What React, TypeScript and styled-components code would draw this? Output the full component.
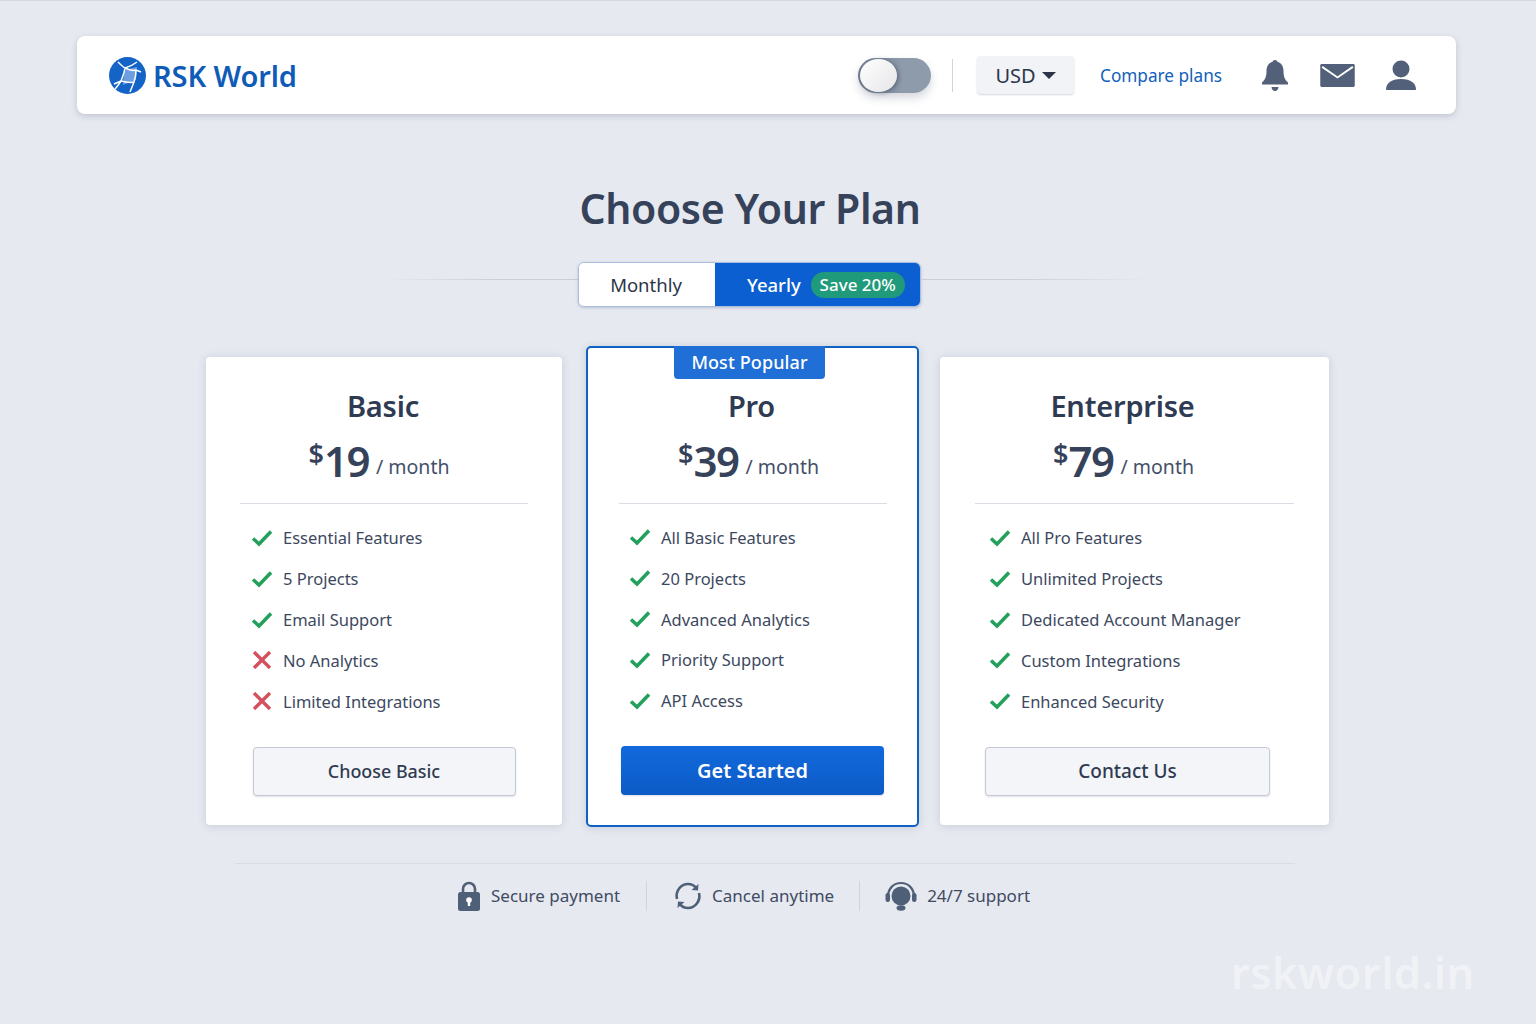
import styled, { createGlobalStyle } from 'styled-components';
import { ReactNode } from 'react';

const GlobalStyle = createGlobalStyle`
    html, body {
        margin: 0;
        padding: 0;
    }
    body {
        background: #e6e9f0;
        font-family: "Noto Sans", "Open Sans", sans-serif;
        color: #2f3b52;
    }
    * { box-sizing: border-box; }
`;

const Page = styled.div`
    position: relative;
    width: 1536px;
    height: 1024px;
    overflow: hidden;
    padding-top: 36px;
    border-top: 1px solid #d5d8e0;
`;

const Header = styled.header`
    width: 1379px;
    height: 78px;
    margin-top: -1px;
    margin-left: 77px;
    padding: 0 39px 0 31px;
    display: flex;
    align-items: center;
    background: #fff;
    border-radius: 8px;
    box-shadow: 0 2px 6px rgba(90, 100, 125, 0.28);
`;

const Logo = styled.div`
    display: flex;
    align-items: center;
    gap: 6px;
    font-size: 29px;
    font-weight: 600;
    letter-spacing: -0.1px;
    color: #0f5cb8;
`;

const HeaderActions = styled.div`
    margin-left: auto;
    display: flex;
    align-items: center;
`;

const Switch = styled.div`
    position: relative;
    width: 73px;
    height: 35px;
    border-radius: 18px;
    background: linear-gradient(90deg, #6f7d91, #8e9bab 60%);
    box-shadow: 0 5px 8px rgba(90, 100, 125, 0.25);
`;

const SwitchKnob = styled.span`
    position: absolute;
    left: 2px;
    top: 1px;
    width: 37px;
    height: 33px;
    border-radius: 50%;
    background: linear-gradient(135deg, #fff, #e6e6e9);
    box-shadow: 2px 1px 4px rgba(50, 60, 80, 0.45);
`;

const VerticalRule = styled.span<{ $height: number; $margin: string }>`
    display: block;
    width: 1px;
    height: ${p => p.$height}px;
    margin: ${p => p.$margin};
    background: #cfd4dd;
`;

const CurrencyButton = styled.div`
    width: 97px;
    height: 38px;
    display: flex;
    align-items: center;
    justify-content: center;
    gap: 6px;
    background: #f2f3f7;
    border-radius: 4px;
    box-shadow: 0 1px 2px rgba(90, 100, 125, 0.25);
    font-size: 20px;
    color: #2b3549;
`;

const Caret = styled.span`
    width: 0;
    height: 0;
    border-left: 7px solid transparent;
    border-right: 7px solid transparent;
    border-top: 7px solid #2b3549;
    margin-top: 1px;
`;

const CompareLink = styled.a`
    margin-left: 26px;
    margin-right: 38px;
    font-size: 17.2px;
    color: #1160b9;
`;

const IconGroup = styled.div`
    display: flex;
    align-items: center;
    gap: 30px;
    color: #526079;
`;

const Title = styled.h1`
    margin: 67px 0 0;
    padding-right: 36px;
    height: 54px;
    text-align: center;
    font-size: 41px;
    line-height: 54px;
    font-weight: 600;
    letter-spacing: -0.4px;
    color: #35425a;
`;

const BillingRow = styled.div`
    margin-top: 27px;
    display: flex;
    align-items: center;
    padding-left: 385px;
`;

const FadeLine = styled.span<{ $width: number; $dir: string }>`
    display: block;
    width: ${p => p.$width}px;
    height: 1px;
    margin-top: -11px;
    background: linear-gradient(${p => p.$dir}, rgba(200, 205, 216, 0), #c8cdd8 60%);
`;

const BillingToggle = styled.div`
    display: flex;
    width: 343px;
    height: 45px;
    border-radius: 6px;
    border: 1px solid #a9bdde;
    overflow: hidden;
    box-shadow: 0 1px 3px rgba(80, 100, 140, 0.3);
`;

const MonthlyOption = styled.div`
    width: 136px;
    padding-right: 2px;
    display: flex;
    align-items: center;
    justify-content: center;
    background: #fff;
    font-size: 18.5px;
    color: #2b3549;
`;

const YearlyOption = styled.div`
    flex: 1;
    padding-left: 32px;
    display: flex;
    align-items: center;
    gap: 10px;
    background: #0b5fd0;
    color: #fff;
    font-size: 18.5px;
    font-weight: 500;
`;

const SaveBadge = styled.span`
    width: 94px;
    height: 26px;
    display: flex;
    align-items: center;
    justify-content: center;
    border-radius: 13px;
    background: #1f9a7b;
    font-size: 17px;
    font-weight: 500;
`;

const Plans = styled.div`
    margin-top: 39px;
    margin-left: 206px;
    display: flex;
    align-items: flex-start;
`;

const Card = styled.section<{ $width: number; $featured?: boolean }>`
    position: relative;
    width: ${p => p.$width}px;
    height: ${p => (p.$featured ? 481 : 468)}px;
    margin-top: ${p => (p.$featured ? 0 : 11)}px;
    margin-left: ${p => (p.$featured ? 24 : 0)}px;
    margin-right: ${p => (p.$featured ? 21 : 0)}px;
    padding-top: ${p => (p.$featured ? 34.5 : 26)}px;
    display: flex;
    flex-direction: column;
    align-items: center;
    background: #fff;
    border-radius: ${p => (p.$featured ? 5 : 4)}px;
    border: ${p => (p.$featured ? '2.5px solid #0f62c4' : 'none')};
    box-shadow: 0 1px 8px rgba(90, 100, 125, 0.22);
`;

const PopularBadge = styled.div`
    position: absolute;
    top: -2.5px;
    left: 86px;
    width: 151px;
    height: 33px;
    display: flex;
    align-items: center;
    justify-content: center;
    background: #1f6fd6;
    color: #fff;
    border-radius: 0 0 4px 4px;
    font-size: 18px;
    font-weight: 500;
    letter-spacing: 0.1px;
`;

const PlanName = styled.h2<{ $shift: number }>`
    margin: 0;
    height: 46px;
    line-height: 46px;
    font-size: 29px;
    font-weight: 600;
    letter-spacing: -0.2px;
    color: #2f3b52;
    transform: translateX(${p => p.$shift}px);
`;

const Price = styled.div<{ $shift: number }>`
    margin-top: 10px;
    height: 44px;
    display: flex;
    align-items: baseline;
    color: #35425a;
    transform: translateX(${p => p.$shift}px);
`;

const Currency = styled.span`
    font-size: 27px;
    font-weight: 600;
    align-self: flex-start;
    line-height: 30px;
`;

const Amount = styled.span`
    font-size: 42px;
    line-height: 44px;
    font-weight: 600;
    letter-spacing: -1.5px;
`;

const Period = styled.span`
    margin-left: 7px;
    font-size: 19.5px;
    color: #44506a;
    transform: translateY(-3px);
`;

const CardRule = styled.hr<{ $width: number }>`
    width: ${p => p.$width}px;
    margin: 20px 0 0;
    border: none;
    height: 1px;
    background: #dadde3;
`;

const FeatureList = styled.ul<{ $left: number }>`
    list-style: none;
    margin: 13.6px 0 0;
    padding: 0 0 0 ${p => p.$left}px;
    align-self: stretch;
`;

const Feature = styled.li`
    height: 40.8px;
    display: flex;
    align-items: center;
    gap: 10px;
    font-size: 16.5px;
    color: #3c4860;
`;

const CtaButton = styled.button<{ $width: number; $primary?: boolean; $shift: number; $fontSize: number }>`
    width: ${p => p.$width}px;
    height: 49px;
    margin-top: 25.4px;
    transform: translateX(${p => p.$shift}px);
    border-radius: 4px;
    font-family: inherit;
    font-size: ${p => p.$fontSize}px;
    font-weight: ${p => (p.$primary ? 600 : 500)};
    color: ${p => (p.$primary ? '#fff' : '#2f3b52')};
    background: ${p => (p.$primary ? 'linear-gradient(180deg, #1269dc, #0c5bc6)' : '#f4f5f8')};
    border: ${p => (p.$primary ? 'none' : '1px solid #c4c9d3')};
    box-shadow: 0 1px 2px rgba(90, 100, 125, 0.2);
`;

const Footer = styled.footer`
    width: 1060px;
    margin: 36px 0 0 235px;
    padding-top: 2px;
    border-top: 1px solid #d9dce4;
    display: flex;
    align-items: center;
    padding-left: 222px;
    height: 62px;
`;

const Assurance = styled.div`
    display: flex;
    align-items: center;
    gap: 10px;
    font-size: 17px;
    color: #3f4b63;
`;

const Watermark = styled.div`
    position: absolute;
    left: 1231px;
    top: 940px;
    font-size: 43.5px;
    line-height: 62px;
    font-weight: 600;
    letter-spacing: 0.4px;
    color: #f0f2f6;
`;

const GlobeIcon = () => (
    <svg width="39" height="39" viewBox="0 0 39 39">
        <circle cx="19.5" cy="19.5" r="18.5" fill="#1464c8" />
        <path d="M16 14 L29 11 L28 24 L15 29 Z" fill="#6d9fe0" />
        <path d="M10 6 C13 9 15 11 17 12 C21 11 25 9 29 6 M17 12 C16 18 14 22 13 25 C11 28 9 31 7 33 M17 12 C21 14 25 15 28 14 L33 16 M28 14 C28 19 27 23 26 26 L22 36 M13 25 C17 26 22 27 26 26 M13 25 L6 28" stroke="#fff" strokeWidth="1.5" fill="none" />
    </svg>
);

const BellIcon = () => (
    <svg width="30" height="33" viewBox="0 0 30 33" fill="currentColor">
        <circle cx="15" cy="3.5" r="2.5" />
        <path d="M15 2.5c-5.5 0-8.5 4-8.5 9.5 0 6-1.5 9-4.5 11.5v2h26v-2c-3-2.5-4.5-5.5-4.5-11.5 0-5.5-3-9.5-8.5-9.5z" />
        <path d="M11.5 28h7c0 2.2-1.5 4-3.500 4s-3.500-1.800-3.500-4z" />
    </svg>
);

const MailIcon = () => (
    <svg width="35" height="23" viewBox="0 0 36 24">
        <rect width="36" height="24" rx="1.5" fill="currentColor" />
        <path d="M2 3 L18 14 L34 3" stroke="#fff" strokeWidth="2" fill="none" />
    </svg>
);

const UserIcon = () => (
    <svg width="32" height="30" viewBox="0 0 32 30" fill="currentColor">
        <circle cx="16" cy="9" r="8.5" />
        <path d="M1 30c0-7 5-11 15-11s15 4 15 11z" />
    </svg>
);

const CheckIcon = () => (
    <svg width="22" height="18" viewBox="0 0 22 18">
        <path d="M2 9.5 L8 15 L20 2.5" stroke="#23a05c" strokeWidth="3.5" fill="none" />
    </svg>
);

const CrossIcon = () => (
    <svg width="22" height="18" viewBox="0 0 22 18">
        <path d="M3 1 L19 17 M19 1 L3 17" stroke="#d4505c" strokeWidth="3.4" fill="none" />
    </svg>
);

const LockIcon = () => (
    <svg width="24" height="30" viewBox="0 0 24 30" fill="none">
        <path d="M6 13V8a6 6 0 0 1 12 0v5" stroke="#4f5f78" strokeWidth="2.6" />
        <rect x="1" y="11" width="22" height="19" rx="2.5" fill="#4f5f78" />
        <circle cx="12" cy="19" r="2.8" fill="#fff" />
        <rect x="10.8" y="20" width="2.4" height="5" fill="#fff" />
    </svg>
);

const RefreshIcon = () => (
    <svg width="28" height="28" viewBox="0 0 28 28" fill="none" stroke="#4f5f78" strokeWidth="2.6">
        <path d="M3 17C1 9 7 2 14 2c3 0 6 1 8 4" />
        <path d="M25 11c2 8-4 15-11 15-3 0-6-1-8-4" />
        <path d="M24.5 2 L24 8.5 L17.5 8 Z M3.5 26 L4 19.5 L10.5 20 Z" fill="#4f5f78" stroke="none" />
    </svg>
);

const HeadsetIcon = () => (
    <svg width="32" height="30" viewBox="0 0 32 30" fill="none">
        <path d="M3 16C3 7 9 2 16 2s13 5 13 14" stroke="#4f5f78" strokeWidth="2.2" />
        <ellipse cx="16" cy="15" rx="9.5" ry="9.5" fill="#4f5f78" />
        <rect x="0.5" y="12" width="4.5" height="9" rx="2.2" fill="#4f5f78" />
        <rect x="27" y="12" width="4.5" height="9" rx="2.2" fill="#4f5f78" />
        <ellipse cx="16" cy="27" rx="4.5" ry="2.8" fill="#4f5f78" />
    </svg>
);

type FeatureItem = { label: string; included: boolean };

type Plan = {
    name: string;
    price: string;
    cta: string;
    ctaSize: number;
    width: number;
    nameShift: number;
    priceShift: number;
    ruleWidth: number;
    listLeft: number;
    buttonWidth: number;
    buttonShift: number;
    featured?: boolean;
    features: FeatureItem[];
};

const yes = (label: string): FeatureItem => ({ label, included: true });
const no = (label: string): FeatureItem => ({ label, included: false });

const plans: Plan[] = [
    {
        name: 'Basic',
        price: '19',
        cta: 'Choose Basic',
        ctaSize: 17.9,
        width: 356,
        nameShift: -1,
        priceShift: -5,
        ruleWidth: 288,
        listLeft: 45,
        buttonWidth: 263,
        buttonShift: 0,
        features: [yes('Essential Features'), yes('5 Projects'), yes('Email Support'), no('No Analytics'), no('Limited Integrations')],
    },
    {
        name: 'Pro',
        price: '39',
        cta: 'Get Started',
        ctaSize: 19.9,
        width: 333,
        nameShift: -1,
        priceShift: -4,
        ruleWidth: 268,
        listLeft: 41,
        buttonWidth: 263,
        buttonShift: 0,
        featured: true,
        features: [yes('All Basic Features'), yes('20 Projects'), yes('Advanced Analytics'), yes('Priority Support'), yes('API Access')],
    },
    {
        name: 'Enterprise',
        price: '79',
        cta: 'Contact Us',
        ctaSize: 19,
        width: 389,
        nameShift: -12,
        priceShift: -11,
        ruleWidth: 319,
        listLeft: 49,
        buttonWidth: 285,
        buttonShift: -7,
        features: [yes('All Pro Features'), yes('Unlimited Projects'), yes('Dedicated Account Manager'), yes('Custom Integrations'), yes('Enhanced Security')],
    },
];

function Assured({ icon, children }: { icon: ReactNode; children: ReactNode }) {
    return (
        <Assurance>
            {icon}
            <span>{children}</span>
        </Assurance>
    );
}

export default function App() {
    return (
        <Page>
            <GlobalStyle />
            <Header>
                <Logo>
                    <GlobeIcon />
                    RSK World
                </Logo>
                <HeaderActions>
                    <Switch>
                        <SwitchKnob />
                    </Switch>
                    <VerticalRule $height={33} $margin="0 24px 0 21px" />
                    <CurrencyButton>
                        USD
                        <Caret />
                    </CurrencyButton>
                    <CompareLink>Compare plans</CompareLink>
                    <IconGroup>
                        <BellIcon />
                        <MailIcon />
                        <UserIcon />
                    </IconGroup>
                </HeaderActions>
            </Header>

            <Title>Choose Your Plan</Title>

            <BillingRow>
                <FadeLine $width={193} $dir="90deg" />
                <BillingToggle>
                    <MonthlyOption>Monthly</MonthlyOption>
                    <YearlyOption>
                        Yearly
                        <SaveBadge>Save 20%</SaveBadge>
                    </YearlyOption>
                </BillingToggle>
                <FadeLine $width={230} $dir="270deg" />
            </BillingRow>

            <Plans>
                {plans.map(plan => (
                    <Card key={plan.name} $width={plan.width} $featured={plan.featured}>
                        {plan.featured && <PopularBadge>Most Popular</PopularBadge>}
                        <PlanName $shift={plan.nameShift}>{plan.name}</PlanName>
                        <Price $shift={plan.priceShift}>
                            <Currency>$</Currency>
                            <Amount>{plan.price}</Amount>
                            <Period>/ month</Period>
                        </Price>
                        <CardRule $width={plan.ruleWidth} />
                        <FeatureList $left={plan.listLeft}>
                            {plan.features.map(item => (
                                <Feature key={item.label}>
                                    {item.included ? <CheckIcon /> : <CrossIcon />}
                                    {item.label}
                                </Feature>
                            ))}
                        </FeatureList>
                        <CtaButton
                            $width={plan.buttonWidth}
                            $primary={plan.featured}
                            $shift={plan.buttonShift}
                            $fontSize={plan.ctaSize}
                        >
                            {plan.cta}
                        </CtaButton>
                    </Card>
                ))}
            </Plans>

            <Footer>
                <Assured icon={<LockIcon />}>Secure payment</Assured>
                <VerticalRule $height={30} $margin="0 27px 0 26px" />
                <Assured icon={<RefreshIcon />}>Cancel anytime</Assured>
                <VerticalRule $height={30} $margin="0 25px 0 25px" />
                <Assured icon={<HeadsetIcon />}>24/7 support</Assured>
            </Footer>

            <Watermark>rskworld.in</Watermark>
        </Page>
    );
}
